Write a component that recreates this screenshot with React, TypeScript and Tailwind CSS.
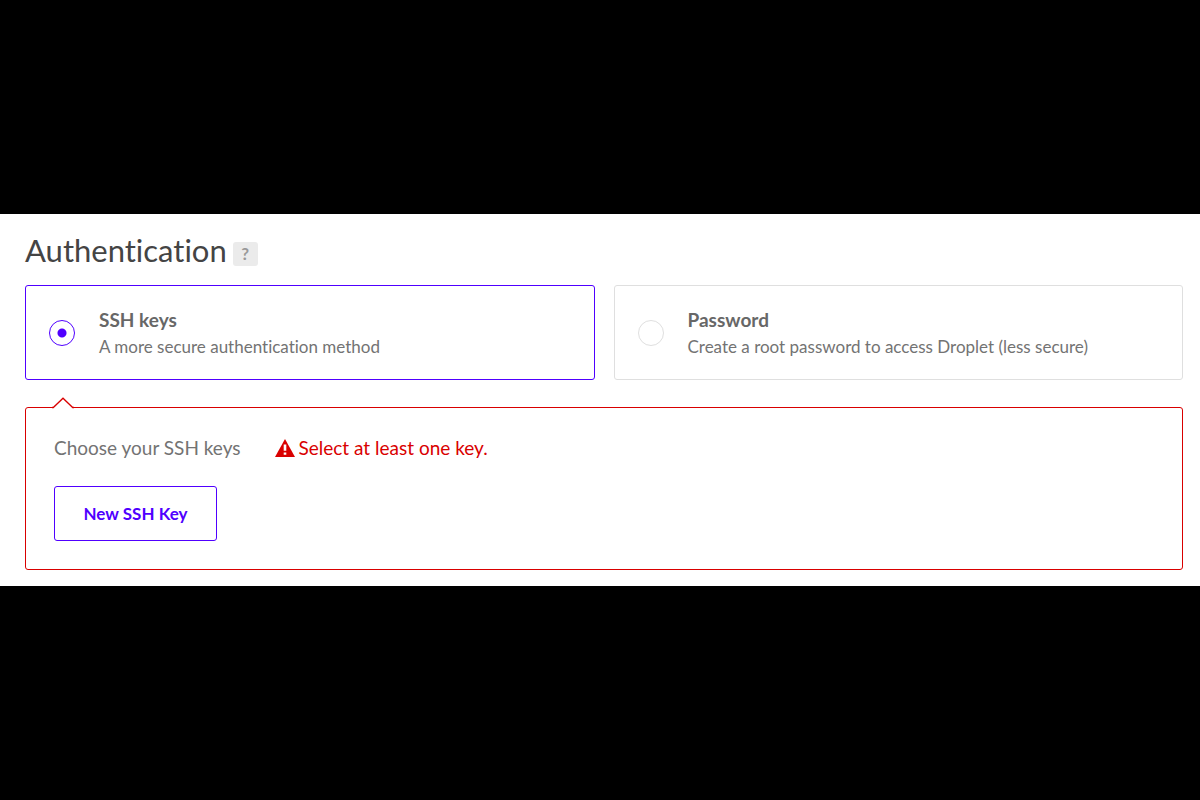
import { useState } from "react";

type Method = "ssh" | "password";

const methods: { id: Method; title: string; detail: string }[] = [
  { id: "ssh", title: "SSH keys", detail: "A more secure authentication method" },
  {
    id: "password",
    title: "Password",
    detail: "Create a root password to access Droplet (less secure)",
  },
];

function WarningIcon() {
  return (
    <svg viewBox="0 0 20 18" className="h-[18px] w-5 shrink-0" aria-hidden="true">
      <path d="M10 0 20 18H0Z" fill="#d90000" />
      <path d="M8.7 5.500h2.600v6.300H8.700ZM8.700 13.500h2.600v2.200H8.700Z" fill="#fff" />
    </svg>
  );
}

export default function App() {
  const [method, setMethod] = useState<Method>("ssh");

  return (
    <div className="flex min-h-screen flex-col justify-center bg-black font-['Lato',sans-serif] [font-variant-ligatures:none]">
      <main className="bg-white pt-[18px] pr-[17px] pb-4 pl-[25px]">
        <div className="flex items-center gap-1.5">
          <h1 className="text-[31px] leading-9 text-[#444]">Authentication</h1>
          <button
            type="button"
            aria-label="Help"
            className="mt-2 h-6 w-[25px] rounded-[3px] bg-[#ebebeb] text-[17px] leading-6 font-bold text-[#999]"
          >
            ?
          </button>
        </div>

        <div className="mt-[17px] grid grid-cols-2 gap-[19px]">
          {methods.map((m) => (
            <label
              key={m.id}
              className="flex h-[95px] cursor-pointer items-center gap-6 rounded-[3px] border border-[#dfdfdf] px-[23px] has-checked:border-[#5000ff]"
            >
              <input
                type="radio"
                name="method"
                checked={method === m.id}
                onChange={() => setMethod(m.id)}
                className="size-[26px] shrink-0 appearance-none rounded-full border border-[#dfdfdf] bg-white checked:border-[#5000ff] checked:bg-[radial-gradient(circle,#5000ff_4px,transparent_5px)]"
              />
              <span className="flex flex-col text-[17px] leading-[27px] text-[#737373]">
                <span className="text-[19px] font-bold text-[#676767]">{m.title}</span>
                <span>{m.detail}</span>
              </span>
            </label>
          ))}
        </div>

        <section className="relative mt-[27px] rounded-[3px] border border-[#d90000] px-7 pt-[27px] pb-7">
          <svg
            viewBox="0 0 22 12"
            className="absolute -top-[11px] left-[26px] h-3 w-[22px]"
            aria-hidden="true"
          >
            <path d="M1 12V10.500L11 1l10 9.500V12Z" fill="#fff" />
            <path d="M0 10.500H1.300L11 1.200l9.700 9.300H22" fill="none" stroke="#d90000" strokeWidth="1.300" />
          </svg>
          <div className="flex gap-[34px] text-[19px] leading-[26px]">
            <h2 className="text-[#737373]">Choose your SSH keys</h2>
            <p role="alert" className="flex items-center gap-1 text-[#d90000]">
              <WarningIcon />
              Select at least one key.
            </p>
          </div>
          <button
            type="button"
            className="mt-[25px] h-[55px] w-[163px] rounded-[3px] border border-[#5000ff] text-[17px] font-bold text-[#5000ff]"
          >
            New SSH Key
          </button>
        </section>
      </main>
    </div>
  );
}
